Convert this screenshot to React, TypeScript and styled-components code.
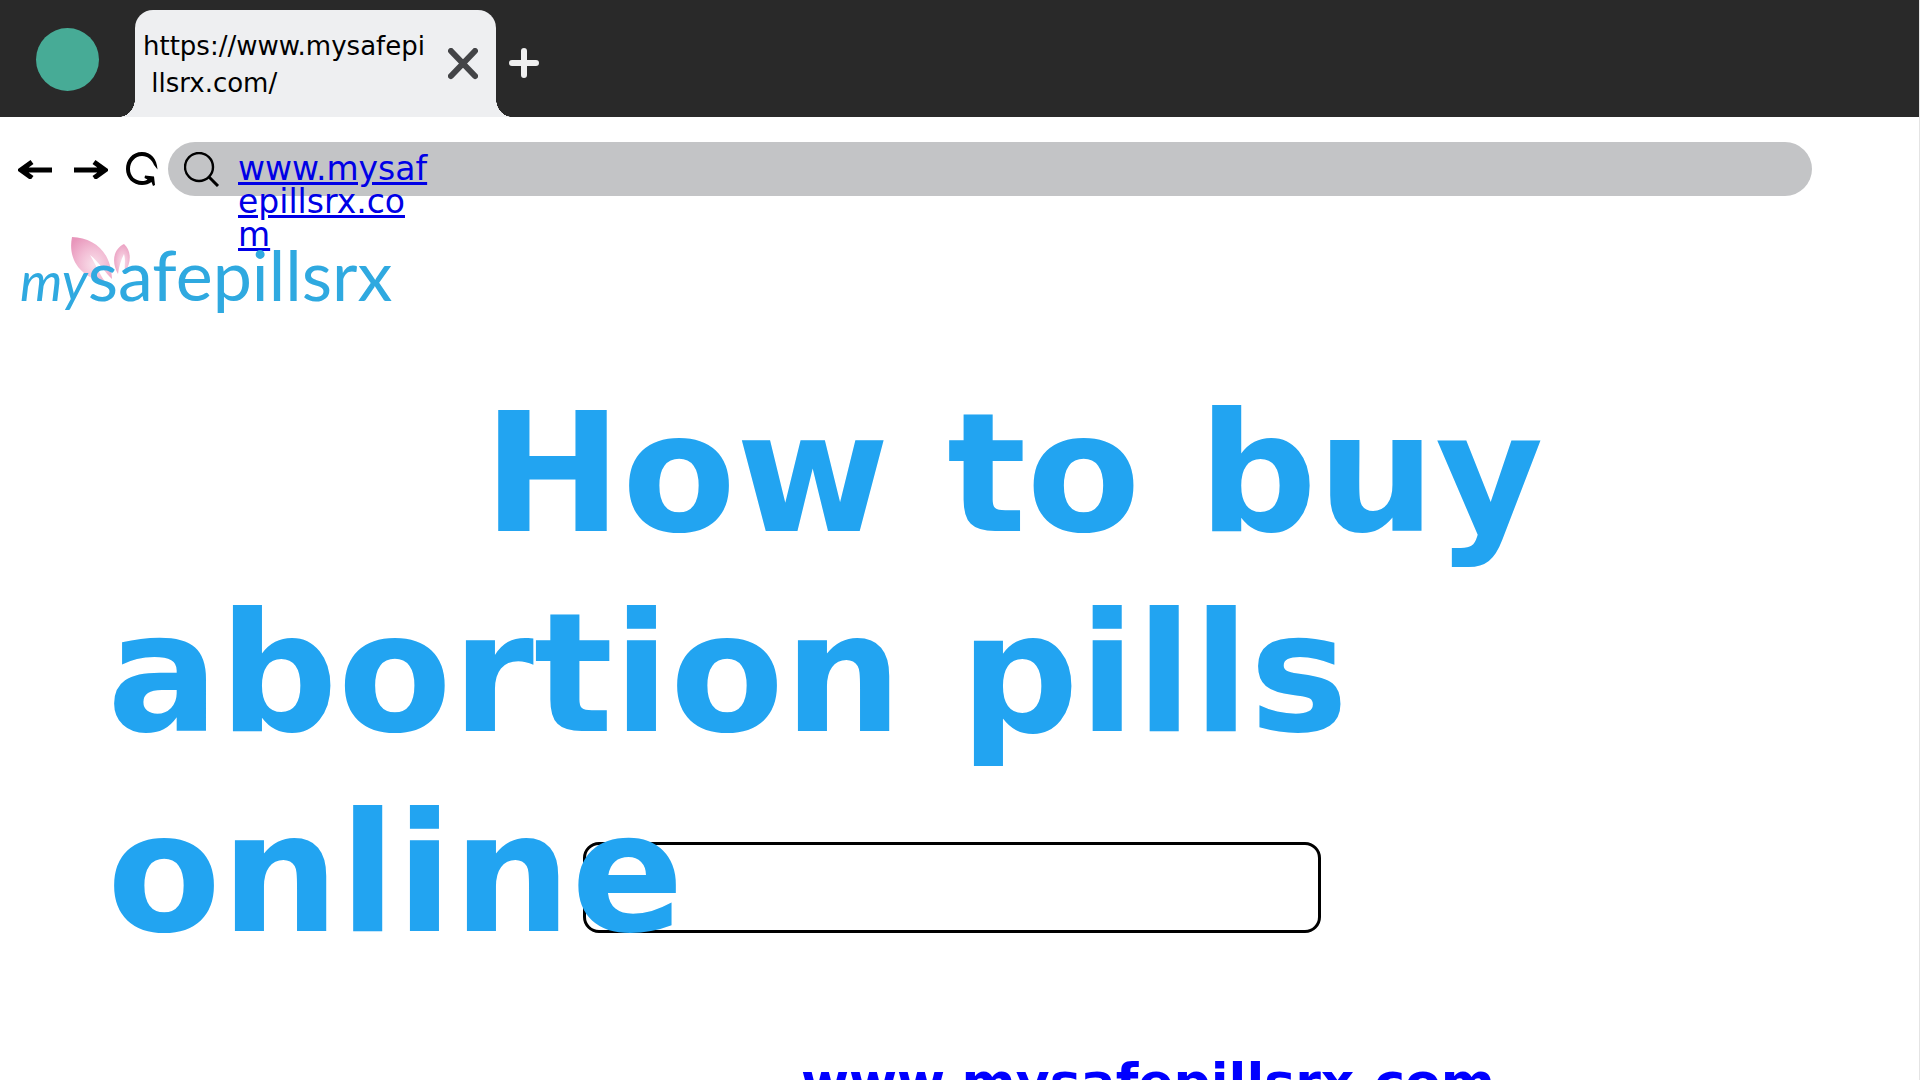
import React from "react";
import styled, { createGlobalStyle } from "styled-components";

const GlobalStyle = createGlobalStyle`
  *, *::before, *::after { box-sizing: border-box; }
  body {
    margin: 0;
    background: #fff;
    font-family: Verdana, "DejaVu Sans", sans-serif;
    color: #000;
  }
`;

const Page = styled.div`
  height: 100vh;
  overflow: hidden;
  background: #fff;
  border-right: 1px solid #e4e4e4;
`;

const TabStrip = styled.header`
  display: flex;
  align-items: flex-end;
  height: 117px;
  padding-left: 36px;
  background: #292929;
`;

const Avatar = styled.button`
  width: 63px;
  height: 63px;
  margin-bottom: 26px;
  padding: 0;
  border: 0;
  border-radius: 50%;
  background: #47ab96;
`;

const Tab = styled.div`
  position: relative;
  display: flex;
  align-items: center;
  justify-content: space-between;
  width: 361px;
  height: 107px;
  margin-left: 36px;
  padding: 0 18px 0 8px;
  border-radius: 18px 18px 0 0;
  background: #eeeff1;

  &::before,
  &::after {
    content: "";
    position: absolute;
    bottom: 0;
    width: 16px;
    height: 18px;
  }
  &::before {
    right: 100%;
    background: radial-gradient(ellipse 16px 18px at 0 0, #292929 98%, #eeeff1 100%);
  }
  &::after {
    left: 100%;
    background: radial-gradient(ellipse 16px 18px at 100% 0, #292929 98%, #eeeff1 100%);
  }
`;

const TabTitle = styled.span`
  padding-top: 2px;
  font-size: 26px;
  line-height: 37px;
  white-space: pre;
`;

const IconButton = styled.button`
  display: flex;
  padding: 0;
  border: 0;
  background: none;
  color: inherit;
`;

const CloseButton = styled(IconButton)`
  color: #434447;
`;

const NewTabButton = styled(IconButton)`
  margin: 0 0 38px 12px;
  color: #efefef;
`;

const Toolbar = styled.nav`
  display: flex;
  align-items: center;
  height: 54px;
  margin-top: 25px;
  padding: 0 107px 0 18px;
`;

const NavButtons = styled.div`
  display: flex;
  align-items: center;
  width: 150px;
  gap: 18px;
`;

const AddressBar = styled.div`
  display: flex;
  flex: 1;
  align-items: flex-start;
  height: 54px;
  padding: 10px 16px;
  gap: 18px;
  border-radius: 27px;
  background: #c3c4c6;
`;

const AddressLink = styled.a`
  width: 196px;
  font-size: 33px;
  line-height: 33px;
  color: #0000e6;
  word-break: break-all;
  text-decoration: underline;
`;

const Logo = styled.a`
  position: relative;
  display: flex;
  align-items: baseline;
  width: max-content;
  height: 84px;
  margin: 36px 0 0 20px;
  font-family: Lato, sans-serif;
  line-height: 84px;
  color: #2fa9e0;
  text-decoration: none;
`;

const Leaves = styled.svg`
  position: absolute;
  left: 50px;
  top: 4px;
`;

const LogoPrefix = styled.span`
  position: relative;
  font-size: 54px;
  font-style: italic;
`;

const LogoName = styled.span`
  position: relative;
  font-size: 70px;
`;

const Hero = styled.main`
  display: grid;
  margin-top: 58px;
  padding: 0 107px;
`;

const Title = styled.h1`
  grid-area: 1 / 1;
  z-index: 1;
  margin: 0;
  font-size: 166px;
  line-height: 200px;
  font-weight: 700;
  text-indent: 376px;
  color: #22a4f1;
  pointer-events: none;
`;

const SearchField = styled.input`
  grid-area: 1 / 1;
  align-self: end;
  width: 738px;
  height: 91px;
  margin: 0 0 41px 476px;
  padding: 0 24px;
  border: 3px solid #000;
  border-radius: 16px;
  background: #fff;
  font: inherit;
  font-size: 32px;
`;

const Footer = styled.footer`
  padding: 76px 0 0 801px;
`;

const SiteLink = styled.a`
  font-size: 52px;
  line-height: 64px;
  font-weight: 700;
  color: #0000ff;
`;

const ArrowIcon = ({ forward = false }: { forward?: boolean }) => (
  <svg width="36" height="20" viewBox="0 0 36 20" fill="none" stroke="currentColor" strokeWidth="5">
    {forward ? (
      <path d="M2 11H32M22 3L33 11L22 19" />
    ) : (
      <path d="M34 11H4M14 3L3 11L14 19" />
    )}
  </svg>
);

const ReloadIcon = () => (
  <svg width="32" height="34" viewBox="0 0 32 34" fill="currentColor">
    <path d="M31.500 17.500C31 7 25 0 16 0C6 0 0 8 0 17C0 26 7 33 16 33C20 33 23 32 25.500 30L27 34L29 33L28 24.500L19 23.500L18.500 26L21.500 27.500C20 28.500 18 29 16 29C9 29 4 24 4 17C4 10 9 4 16 4C22 4 26 8 28 13Z" />
  </svg>
);

const SearchIcon = () => (
  <svg width="36" height="35" viewBox="0 0 36 35" fill="none" stroke="currentColor" strokeWidth="2.4">
    <circle cx="15" cy="15" r="14" />
    <path d="M25 25L34 34" strokeWidth="3" />
  </svg>
);

const CloseIcon = () => (
  <svg width="30" height="32" viewBox="0 0 30 32" fill="none" stroke="currentColor" strokeWidth="6" strokeLinecap="round">
    <path d="M3 3L27 28M27 3L3 28" />
  </svg>
);

const PlusIcon = () => (
  <svg width="32" height="32" viewBox="0 0 32 32" fill="none" stroke="currentColor" strokeWidth="6" strokeLinecap="round">
    <path d="M4 16H28M16 4V28" />
  </svg>
);

export default function App() {
  return (
    <>
      <GlobalStyle />
      <Page>
        <TabStrip>
          <Avatar aria-label="Profile" />
          <Tab>
            <TabTitle>{"https://www.mysafepi\n llsrx.com/"}</TabTitle>
            <CloseButton aria-label="Close tab">
              <CloseIcon />
            </CloseButton>
          </Tab>
          <NewTabButton aria-label="New tab">
            <PlusIcon />
          </NewTabButton>
        </TabStrip>
        <Toolbar>
          <NavButtons>
            <IconButton aria-label="Back">
              <ArrowIcon />
            </IconButton>
            <IconButton aria-label="Forward">
              <ArrowIcon forward />
            </IconButton>
            <IconButton aria-label="Reload">
              <ReloadIcon />
            </IconButton>
          </NavButtons>
          <AddressBar>
            <SearchIcon />
            <AddressLink href="#">www.mysafepillsrx.com</AddressLink>
          </AddressBar>
        </Toolbar>
        <Logo href="#">
          <Leaves width="62" height="54" viewBox="0 0 62 54">
            <defs>
              <radialGradient id="leaf" cx="0.55" cy="0.6" r="0.7">
                <stop offset="0" stopColor="#f9dfea" />
                <stop offset="0.5" stopColor="#f2bcd4" />
                <stop offset="1" stopColor="#e896bb" />
              </radialGradient>
            </defs>
            <path d="M2 1C24 2 41 15 42 43C36 38 30 27 20 19C27 31 30 39 36 47C14 42 -3 27 2 1Z" fill="url(#leaf)" />
            <path d="M54 8C61 14 62 26 55 36C54 30 56 25 54 18C51 24 49 30 48 38C42 28 42 14 54 8Z" fill="url(#leaf)" />
          </Leaves>
          <LogoPrefix>my</LogoPrefix>
          <LogoName>safepillsrx</LogoName>
        </Logo>
        <Hero>
          <Title>How to buy abortion pills online</Title>
          <SearchField type="text" aria-label="Search" />
        </Hero>
        <Footer>
          <SiteLink href="#">www.mysafepillsrx.com</SiteLink>
        </Footer>
      </Page>
    </>
  );
}
